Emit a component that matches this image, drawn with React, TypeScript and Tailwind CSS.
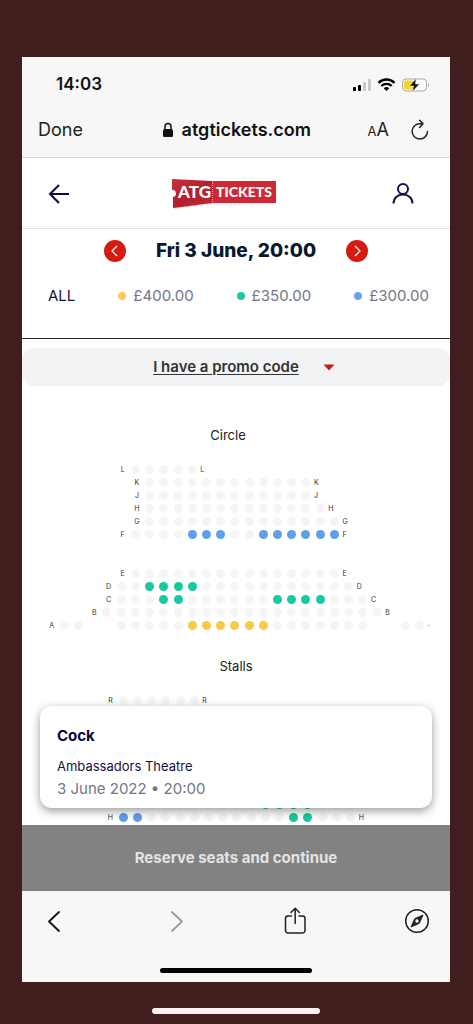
type Row = {
  label: string;
  start: number;
  seats: string;
  end?: string;
};

// "." taken, "b" £300, "g" £350, "y" £400, "_" aisle
const circleBack: Row[] = [
  { label: "L", start: 6, seats: "....." },
  { label: "K", start: 7, seats: "............" },
  { label: "J", start: 7, seats: "............" },
  { label: "H", start: 7, seats: "............." },
  { label: "G", start: 7, seats: ".............." },
  { label: "F", start: 6, seats: "....bbb..bbbbbb" },
];

const circleFront: Row[] = [
  { label: "E", start: 6, seats: "..............." },
  { label: "D", start: 5, seats: "..gggg..........." },
  { label: "C", start: 5, seats: "...gg......gggg..." },
  { label: "B", start: 4, seats: "...................." },
  { label: "A", start: 1, seats: "..__.....yyyyyy.......__..", end: "·" },
];

const stallsBack: Row[] = [{ label: "R", start: 5, seats: "......" }];

const stallsFront: Row[] = [
  { label: "", start: 5, seats: "..........gggg..." },
  { label: "H", start: 5, seats: "bb..........gg..." },
];

const seatColors: Record<string, string> = {
  b: "bg-[#5f9fe8]",
  g: "bg-[#17c9a0]",
  y: "bg-[#f9cb45]",
};

const prices = [
  { amount: "£400.00", color: "bg-[#f9cb55]" },
  { amount: "£350.00", color: "bg-[#21c9a3]" },
  { amount: "£300.00", color: "bg-[#68a4e8]" },
];

function Seat({ kind, name }: { kind: string; name: string }) {
  if (kind === "_") {
    return <span />;
  }
  if (kind === ".") {
    return <span className="h-[9px] w-[9px] justify-self-center rounded-full bg-[#f5f5f6]" />;
  }
  return (
    <button
      type="button"
      aria-label={name}
      className={`h-[9px] w-[9px] justify-self-center rounded-full ${seatColors[kind]}`}
    />
  );
}

function SeatRows({ rows }: { rows: Row[] }) {
  return (
    <div>
      {rows.map((row, index) => (
        <div key={index} className="grid h-[13px] grid-cols-[repeat(28,minmax(0,1fr))] items-center text-[7px] leading-none text-[#333]">
          <span className="pl-[3px] text-center" style={{ gridColumnStart: row.start }}>{row.label}</span>
          {row.seats.split("").map((kind, seat) => (
            <Seat key={seat} kind={kind} name={`Row ${row.label} seat ${seat + 1}`} />
          ))}
          <span className="pl-px">{row.end ?? row.label}</span>
        </div>
      ))}
    </div>
  );
}

function Logo() {
  return (
    <svg viewBox="0 0 104 32" className="h-8 w-[104px]" role="img" aria-label="ATG Tickets">
      <defs>
        <linearGradient id="ticket" x1="0" y1="0" x2="1" y2="1">
          <stop offset="0" stopColor="#c8323c" />
          <stop offset="0.5" stopColor="#b31f2f" />
          <stop offset="1" stopColor="#c62935" />
        </linearGradient>
      </defs>
      <path d="M2 31 40 26V24L2 28Z" fill="#e4dcdc" />
      <path d="M40 3H104V25H40Z" fill="#cf2733" />
      <path d="M0 1 40 3V25L1 30V19A3.500 3.500 0 0 0 0 12Z" fill="url(#ticket)" />
      <path d="M40.500 3V25" stroke="#f3c3c6" strokeDasharray="1 1" />
      <text x="6" y="20" fontFamily="Lato, sans-serif" fontWeight="900" fontSize="17" fill="#fff">ATG</text>
      <text x="44" y="19" fontFamily="Lato, sans-serif" fontWeight="900" fontSize="14" fill="#fff">TICKETS</text>
    </svg>
  );
}

function StatusIcons() {
  return (
    <svg viewBox="0 0 78 16" className="h-4 w-[78px]" aria-hidden="true">
      <rect x="1" y="10" width="3" height="4" rx="0.800" fill="#000" />
      <rect x="6" y="8" width="3" height="6" rx="0.800" fill="#000" />
      <rect x="11" y="5" width="3" height="9" rx="0.800" fill="#c8c8c8" />
      <rect x="16" y="2" width="3" height="12" rx="0.800" fill="#c8c8c8" />
      <g fill="none" stroke="#000" strokeWidth="2.400">
        <path d="M26.500 5.800a11.500 11.500 0 0 1 16 0" />
        <path d="M29.300 9a7.500 7.500 0 0 1 10.400 0" />
      </g>
      <path d="M34.500 14 31.700 11.300a4 4 0 0 1 5.600 0Z" fill="#000" />
      <rect x="50.500" y="2" width="24" height="12" rx="3.500" fill="#fafafa" stroke="#a9a9a9" />
      <path d="M54 3.500H61V12.500H54a2 2 0 0 1-2-2V5.500a2 2 0 0 1 2-2Z" fill="#f6d32b" />
      <path d="M76 6.300a2 2 0 0 1 0 3.600Z" fill="#a9a9a9" />
      <path d="M64 1.500 57.500 9H61.500L60.500 14.500 67.500 7H63.500Z" fill="#111" stroke="#fafafa" strokeWidth="0.500" />
    </svg>
  );
}

function BrowserBar() {
  return (
    <div className="border-b border-[#d8d8d8] bg-[#f7f7f7] pb-2 text-[#111]">
      <div className="flex h-[54px] items-center justify-between pl-[34px] pr-5 pt-[2px]">
        <span className="text-[17px] font-semibold">14:03</span>
        <StatusIcons />
      </div>
      <div className="flex h-[38px] items-center justify-between pl-4 pr-5">
        <button type="button" className="text-lg text-[#222]">Done</button>
        <div className="flex items-center gap-2 pl-[22px] text-lg font-semibold">
          <svg viewBox="0 0 12 16" className="h-4 w-3" aria-hidden="true">
            <rect x="1" y="7" width="10" height="8" rx="1.500" fill="#111" />
            <path d="M3 7.500V4.500a3 3 0 0 1 6 0V7.500" fill="none" stroke="#111" strokeWidth="1.500" />
          </svg>
          <span>atgtickets.com</span>
        </div>
        <div className="flex items-center gap-[21px]">
          <button type="button" aria-label="Text size" className="flex items-baseline text-[#222]">
            <span className="text-[13px]">A</span>
            <span className="text-lg">A</span>
          </button>
          <button type="button" aria-label="Reload">
            <svg viewBox="0 0 20 22" className="h-[22px] w-5" fill="none" stroke="#222" strokeWidth="1.500" strokeLinecap="round" strokeLinejoin="round" aria-hidden="true">
              <path d="M17.500 12.500A7.700 7.700 0 1 1 9.800 4.700H12.500" />
              <path d="M9.500 1.200 13 4.800 9.500 8.500" />
            </svg>
          </button>
        </div>
      </div>
    </div>
  );
}

function DateArrow({ label, path }: { label: string; path: string }) {
  return (
    <button type="button" aria-label={label} className="flex h-[22px] w-[22px] items-center justify-center rounded-full bg-[#d51a12]">
      <svg viewBox="0 0 22 22" className="h-[22px] w-[22px]" fill="none" stroke="#fff" strokeWidth="1.200" aria-hidden="true">
        <path d={path} />
      </svg>
    </button>
  );
}

export default function App() {
  return (
    <div className="min-h-screen bg-[#401e1e] pb-[10px] pl-[22px] pr-[23px] pt-[57px] font-['Inter',sans-serif]">
      <div className="bg-white">
        <BrowserBar />

        <header className="flex h-[71px] items-center justify-between border-b border-[#e4e4e4] px-[26px] pt-[2px]">
          <button type="button" aria-label="Back">
            <svg viewBox="0 0 22 20" className="h-5 w-[22px]" fill="none" stroke="#0a0845" strokeWidth="2" aria-hidden="true">
              <path d="M21 10H2M11 1 2 10 11 19" />
            </svg>
          </button>
          <a href="#home" className="pr-1">
            <Logo />
          </a>
          <button type="button" aria-label="Account" className="px-[10px]">
            <svg viewBox="0 0 22 22" className="h-[22px] w-[22px]" fill="none" stroke="#14124a" strokeWidth="2" aria-hidden="true">
              <circle cx="11" cy="6" r="5" />
              <path d="M1.500 20.500C1.500 15 5.500 11.500 11 11.500S20.500 15 20.500 20.500" />
            </svg>
          </button>
        </header>

        <div className="border-b border-[#222] pb-[19px]">
          <div className="flex h-[44px] items-center justify-center gap-[30px]">
            <DateArrow label="Previous date" path="M13 6 8 11 13 16" />
            <h1 className="text-[19px] font-extrabold text-[#08192f]">Fri 3 June, 20:00</h1>
            <DateArrow label="Next date" path="M9 6 14 11 9 16" />
          </div>
          <div className="flex h-[46px] items-center justify-between pl-[26px] pr-[21px] text-[15px]">
            <button type="button" className="text-[#14123c]">ALL</button>
            {prices.map((price) => (
              <button key={price.amount} type="button" className="flex items-center gap-[7px] text-[#74748a]">
                <span className={`h-2 w-2 rounded-full ${price.color}`} />
                {price.amount}
              </button>
            ))}
          </div>
        </div>

        <button type="button" className="mt-[9px] flex h-[38px] w-full items-center justify-center gap-6 rounded-xl bg-[#f2f3f5] pl-4 text-[15px] font-semibold text-[#333]">
          <span className="underline underline-offset-2">I have a promo code</span>
          <svg viewBox="0 0 12 7" className="h-[7px] w-3" aria-hidden="true">
            <path d="M0.500 0.500H11.500L6 6.500Z" fill="#c51c14" />
          </svg>
        </button>

        <main className="relative pb-px pt-[39px]">
          <section className="pl-[21px] pr-[9px]">
            <h2 className="pr-7 text-center text-[13px] leading-5 text-[#222]">Circle</h2>
            <div className="mt-[18px] flex flex-col gap-[26px]">
              <SeatRows rows={circleBack} />
              <SeatRows rows={circleFront} />
            </div>
          </section>
          <section className="mt-6 pl-[23px] pr-[7px]">
            <h2 className="pr-4 text-center text-[13px] leading-5 text-[#222]">Stalls</h2>
            <div className="mt-[18px] flex flex-col gap-[91px]">
              <SeatRows rows={stallsBack} />
              <SeatRows rows={stallsFront} />
            </div>
          </section>

          <div className="absolute inset-x-[18px] bottom-[17px] rounded-xl bg-white px-[17px] pb-2 pt-[18px] shadow-[0_3px_10px_rgba(0,0,0,0.4)]">
            <h3 className="text-[15px] font-bold leading-6 text-[#0a0840]">Cock</h3>
            <p className="mt-[6px] text-[13px] leading-6 text-[#14123c]">Ambassadors Theatre</p>
            <p className="text-[15px] leading-[22px] text-[#74748a]">3 June 2022 • 20:00</p>
          </div>
        </main>

        <button type="button" className="h-[66px] w-full bg-[#828282] text-[15px] font-bold text-[#e4e4e4]">
          Reserve seats and continue
        </button>

        <nav className="bg-[#f7f7f7] pb-[9px]">
          <div className="flex h-[60px] items-center justify-between px-5">
            <button type="button" aria-label="Previous page" className="pl-1 pr-[10px]">
              <svg viewBox="0 0 16 24" className="h-6 w-4" fill="none" stroke="#111" strokeWidth="1.800" strokeLinecap="round" strokeLinejoin="round" aria-hidden="true">
                <path d="M13 3 3 12.500 13 22" />
              </svg>
            </button>
            <button type="button" aria-label="Next page">
              <svg viewBox="0 0 16 24" className="h-6 w-4" fill="none" stroke="#9a9a9a" strokeWidth="1.800" strokeLinecap="round" strokeLinejoin="round" aria-hidden="true">
                <path d="M3 3 13 12.500 3 22" />
              </svg>
            </button>
            <button type="button" aria-label="Share">
              <svg viewBox="0 0 24 28" className="h-7 w-6" fill="none" stroke="#222" strokeWidth="1.500" strokeLinecap="round" strokeLinejoin="round" aria-hidden="true">
                <path d="M8.500 9H5A2.500 2.500 0 0 0 2.500 11.500V23.500A2.500 2.500 0 0 0 5 26H19.500A2.500 2.500 0 0 0 22 23.500V11.500A2.500 2.500 0 0 0 19.500 9H16" />
                <path d="M12.200 16.500V1.500M8 5.500 12.200 1.300 16.400 5.500" />
              </svg>
            </button>
            <button type="button" aria-label="Open in Safari">
              <svg viewBox="0 0 26 26" className="h-[26px] w-[26px]" aria-hidden="true">
                <circle cx="13" cy="13" r="11.300" fill="none" stroke="#222" strokeWidth="1.500" />
                <path d="M19 7 15.300 15.300 7 19 10.700 10.700Z" fill="#222" stroke="#222" strokeLinejoin="round" />
                <circle cx="13" cy="13" r="1.700" fill="#f7f7f7" />
              </svg>
            </button>
          </div>
          <div className="mx-auto mt-[17px] h-[5px] w-[152px] rounded-full bg-black" />
        </nav>
      </div>
      <div className="mx-auto mt-[26px] h-[6px] w-[168px] rounded-full bg-[#fbf1f1]" />
    </div>
  );
}
